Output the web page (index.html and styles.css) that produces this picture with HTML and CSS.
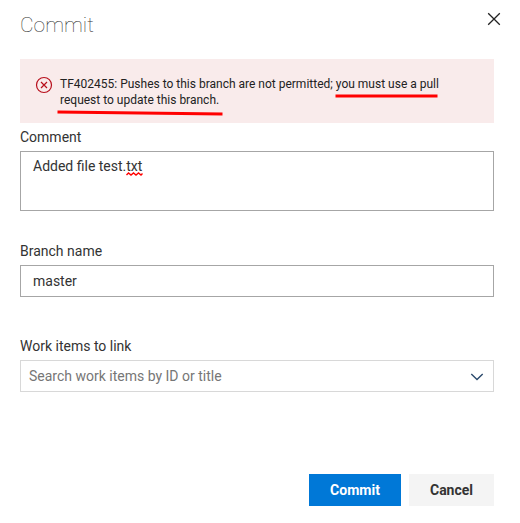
FILE: index.html
```html
<!DOCTYPE html>
<html lang="en">
<head>
<meta charset="utf-8">
<title>Commit</title>
<link rel="stylesheet" href="styles.css">
</head>
<body>
<main class="dialog">
  <header class="header">
    <h1 class="title">Commit</h1>
    <button class="close" aria-label="Close"><svg width="14" height="14" viewBox="0 0 14 14"><path d="M1.2 1.2 12.8 12.8M12.8 1.2 1.2 12.8"/></svg></button>
  </header>
  <div class="alert">
    <svg class="alert-icon" width="18" height="18" viewBox="0 0 18 18"><circle cx="9" cy="9" r="7.5"/><path d="M6 6 12 12M12 6 6 12"/></svg>
    <p class="message">TF402455: Pushes to this branch are not permitted; you must use a pull<br>request to update this branch.</p>
    <svg class="marks" width="474" height="64" viewBox="0 0 474 64"><path d="M315.5 37H417.5M37.5 53 202.5 55"/></svg>
  </div>
  <label class="label" for="comment">Comment</label>
  <div class="box comment" id="comment">Added file test.<span class="misspelled">txt<svg class="squiggle" width="17" height="4" viewBox="0 0 17 4"><path d="M.5 3 2.5 1 5 3 7.5 1 10 3 12.5 1 15 3 16.5 1.5"/></svg></span></div>
  <label class="label">Branch name</label>
  <div class="box branch">master</div>
  <label class="label">Work items to link</label>
  <div class="box search"><span>Search work items by ID or title</span><svg class="chevron" width="14" height="8" viewBox="0 0 14 8"><path d="M1.3 1 7 6.5 12.7 1"/></svg></div>
  <footer class="actions">
    <button class="button primary">Commit</button>
    <button class="button cancel">Cancel</button>
  </footer>
</main>
</body>
</html>
```
FILE: styles.css
```css
* { box-sizing: border-box; }
body { margin: 0; background: #fff; color: #333; font: 14px/20px Roboto, sans-serif; }
button { border: 0; padding: 0; font: inherit; }
svg { display: block; fill: none; }
.dialog { width: 520px; height: 523px; padding: 0 26px 0 20px; }
.header { display: flex; justify-content: space-between; height: 59px; }
.title { margin: 10px 0 0; font-size: 21px; line-height: 30px; font-weight: 100; }
.close { width: 14px; height: 14px; margin: 12px -7px 0 0; background: none; }
.close path { stroke: #222; stroke-width: 1.3; }
.alert { position: relative; display: flex; height: 64px; padding: 17px 15px; background: #f9ebeb; }
.alert-icon { flex: none; margin-right: 7px; stroke: #b80f1c; stroke-width: 1.2; }
.message { margin: 0; font-size: 12px; line-height: 16px; color: #222; white-space: nowrap; }
.marks { position: absolute; inset: 0; stroke: #f00; stroke-width: 3.2; }
.label { display: block; height: 28px; padding-top: 4px; }
.box { border: 1px solid #a6a6a6; }
.comment { height: 60px; padding: 4px 12px; margin-bottom: 26px; }
.misspelled { position: relative; }
.squiggle { position: absolute; left: 0; bottom: -2px; stroke: #f00; stroke-width: 1.4; }
.branch { height: 32px; padding: 5px 12px; margin-bottom: 35px; }
.search { display: flex; justify-content: space-between; align-items: center; height: 32px; padding: 0 9px 0 8px; border-color: #d8d8d8; color: #767676; }
.chevron { stroke: #2b4a6c; stroke-width: 1.4; margin-top: 2px; }
.actions { display: flex; justify-content: flex-end; gap: 8px; margin-top: 82px; }
.button { height: 32px; font-weight: 700; }
.primary { width: 92px; color: #fff; background: #0078d7; }
.cancel { width: 85px; color: #333; background: #f4f4f4; }
```
